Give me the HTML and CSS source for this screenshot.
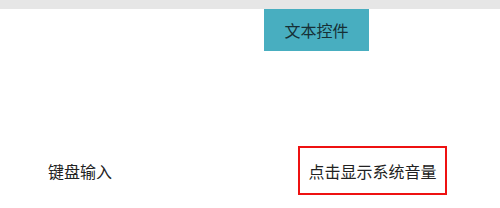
FILE: index.html
```html
<!DOCTYPE html>
<html>

<head>
    <title>系统音量</title>
    <link rel="stylesheet" href="styles.css">
</head>

<body>
    <div id="titlebar"></div>
    <div class="top-row">
        <div class="tab-button">文本控件</div>
    </div>
    <div class="bottom-row">
        <div class="label">键盘输入</div>
        <div class="volume-box">点击显示系统音量</div>
    </div>
</body>

</html>
```
FILE: styles.css
```css
body {
    margin: 0;
    width: 500px;
    height: 208px;
    background: #ffffff;
    font-family: "Noto Sans CJK SC", sans-serif;
    font-size: 16px;
    color: #222222;
}

#titlebar {
    height: 9px;
    background-color: #e6e6e6;
}

.top-row {
    display: flex;
    padding-left: 264px;
}

.tab-button {
    width: 105px;
    height: 42px;
    background-color: #48aec0;
    color: #163036;
    display: flex;
    align-items: center;
    justify-content: center;
}

.bottom-row {
    display: flex;
    align-items: center;
    margin-top: 95px;
    padding-left: 48px;
}

.label {
    width: 250px;
}

.volume-box {
    width: 145px;
    height: 45px;
    border: 2px solid #ee1111;
    display: flex;
    align-items: center;
    justify-content: center;
}
```
